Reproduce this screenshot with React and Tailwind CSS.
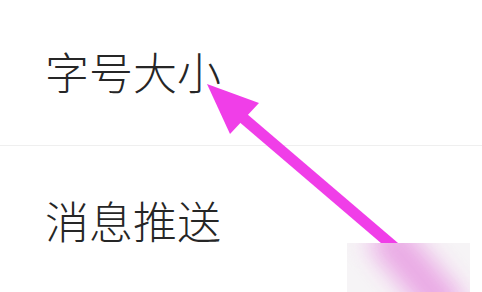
export default function App() {
  const rows = ["字号大小", "消息推送"];

  return (
    <div className="relative h-[292px] w-[482px] overflow-hidden bg-white">
      {rows.map((label, idx) => (
        <div
          key={label}
          className={`flex h-[146px] items-center pl-[45px] ${idx === 0 ? "border-b border-[#efefef] pb-[4px]" : "pt-[2px]"}`}
        >
          <span
            className="text-[44px] font-light leading-none text-[#262626]"
            style={{ fontFamily: '"Noto Sans CJK SC", sans-serif' }}
          >
            {label}
          </span>
        </div>
      ))}

      {/* pink pointer arrow */}
      <svg className="pointer-events-none absolute inset-0" width="482" height="292" viewBox="0 0 482 292">
        <line x1="242" y1="117" x2="400" y2="252" stroke="#f03ee8" strokeWidth="11" />
        <polygon points="207,84 259,103 230,134" fill="#f03ee8" />
      </svg>

      {/* blurred patch bottom right */}
      <div className="absolute left-[347px] top-[243px] h-[49px] w-[123px] overflow-hidden bg-[#f6f4f6]">
        <div className="absolute left-[50px] top-[-25px] h-[110px] w-[40px] rotate-[-40deg] bg-[#eaa8e5] blur-[12px]" />
      </div>
    </div>
  );
}
